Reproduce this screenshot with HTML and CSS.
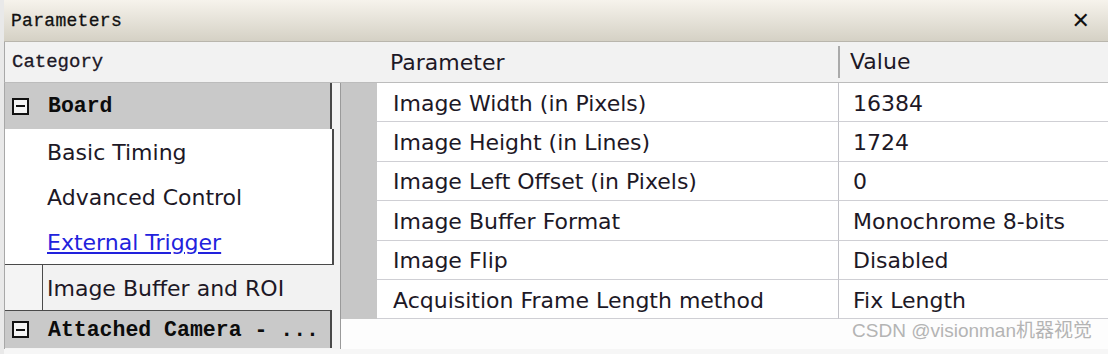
FILE: index.html
```html
<!DOCTYPE html>
<html lang="en">
<head>
    <meta charset="UTF-8">
    <title>Parameters</title>
    <link rel="stylesheet" href="styles.css">
</head>
<body>
    <div class="window">
        <div class="titlebar">
            <span class="title">Parameters</span>
            <span class="close">&#x2715;</span>
        </div>

        <div class="header">
            <div class="head-cat">Category</div>
            <div class="head-param">Parameter</div>
            <div class="head-value">Value</div>
        </div>

        <div class="content">
            <div class="categories">
                <div class="group"><span class="toggle"></span>Board</div>
                <div class="items">
                    <div class="item">Basic Timing</div>
                    <div class="item">Advanced Control</div>
                    <div class="item"><a href="#">External Trigger</a></div>
                </div>
                <div class="item selected">Image Buffer and ROI</div>
                <div class="group last"><span class="toggle"></span>Attached Camera - ...</div>
            </div>

            <div class="grid-wrap">
                <div class="grid">
                    <div class="gutter"></div><div class="cell">Image Width (in Pixels)</div><div class="cell val">16384</div>
                    <div class="gutter"></div><div class="cell">Image Height (in Lines)</div><div class="cell val">1724</div>
                    <div class="gutter"></div><div class="cell">Image Left Offset (in Pixels)</div><div class="cell val">0</div>
                    <div class="gutter"></div><div class="cell">Image Buffer Format</div><div class="cell val">Monochrome 8-bits</div>
                    <div class="gutter"></div><div class="cell">Image Flip</div><div class="cell val">Disabled</div>
                    <div class="gutter"></div><div class="cell">Acquisition Frame Length method</div><div class="cell val">Fix Length</div>
                </div>
                <div class="watermark">CSDN @visionman机器视觉</div>
            </div>
        </div>
    </div>
</body>
</html>
```

FILE: styles.css
```css
body {
    margin: 0;
    background: #f6f6f6;
    font-family: 'DejaVu Sans', 'Noto Sans', sans-serif;
    color: #1d1826;
}
.window {
    width: 1108px;
    height: 354px;
    box-sizing: border-box;
    border-left: 4px solid #e9e9e9;
    overflow: hidden;
}
.titlebar {
    height: 42px;
    display: flex;
    align-items: center;
    justify-content: space-between;
    padding: 0 18px 0 7px;
    background: linear-gradient(to bottom, #f6f3ec, #d5d1c5);
    border-bottom: 1px solid #b9b6ad;
    box-sizing: border-box;
}
.title {
    font-family: 'Liberation Mono', monospace;
    font-size: 18px;
    color: #111;
    letter-spacing: 0.3px;
    -webkit-text-stroke: 0.3px #111;
}
.close {
    font-family: 'DejaVu Sans', sans-serif;
    font-size: 22px;
    font-weight: bold;
    color: #111;
}
.header {
    height: 41px;
    display: flex;
    align-items: center;
    background: #f2f2f2;
    border-bottom: 1px solid #bcbcbc;
    border-left: 1px solid #a8a8a8;
    box-sizing: border-box;
    font-size: 22px;
}
.head-cat {
    width: 377px;
    padding-left: 7px;
    box-sizing: border-box;
    font-family: 'Liberation Mono', monospace;
    font-size: 19px;
    -webkit-text-stroke: 0.3px #1d1826;
}
.head-param {
    width: 456px;
    padding-left: 8px;
    box-sizing: border-box;
}
.head-value {
    padding-left: 10px;
    border-left: 2px solid #aaa;
    height: 32px;
    line-height: 32px;
}
.content {
    display: flex;
    height: 266px;
    border-left: 1px solid #a8a8a8;
}
.categories {
    width: 335px;
    display: flex;
    flex-direction: column;
    background: #f4f4f4;
    font-size: 22px;
}
.group {
    height: 46px;
    width: 327px;
    display: flex;
    align-items: center;
    gap: 19px;
    padding-left: 7px;
    box-sizing: border-box;
    background: #c9c9c9;
    border-right: 2px solid #4a4a4a;
    font-family: 'Liberation Mono', monospace;
    font-weight: bold;
    font-size: 21.5px;
    color: #0c0c0c;
}
.group.last {
    height: 38px;
    border-top: 1px solid #4a4a4a;
}
.toggle {
    width: 17px;
    height: 17px;
    border: 2px solid #111;
    box-sizing: border-box;
    position: relative;
    background: #f4f4f4;
}
.toggle::after {
    content: "";
    position: absolute;
    left: 2px;
    right: 2px;
    top: 5.5px;
    height: 2px;
    background: #111;
}
.items {
    width: 327px;
    background: #fff;
    border-right: 2px solid #4a4a4a;
    border-bottom: 1px solid #4a4a4a;
}
.item {
    height: 45px;
    line-height: 47px;
    padding-left: 42px;
}
.item a {
    color: #2222dd;
}
.selected {
    margin-left: 37px;
    padding-left: 4px;
    height: 45px;
    background: #f2f2f2;
    border-left: 1px solid #4a4a4a;
}
.grid-wrap {
    flex: 1;
    border-left: 1px solid #9a9a9a;
    background: #fdfdfd;
    position: relative;
}
.grid {
    display: grid;
    grid-template-columns: 36px 461px 1fr;
    grid-auto-rows: 39.4px;
    font-size: 22px;
}
.gutter {
    background: #c7c7c7;
}
.cell {
    background: #fff;
    border-bottom: 1px solid #cfcfd4;
    padding-left: 16px;
    padding-top: 2px;
    display: flex;
    align-items: center;
    box-sizing: border-box;
}
.cell.val {
    border-left: 1px solid #c2c2c8;
    padding-left: 14px;
}
.watermark {
    position: absolute;
    right: 16px;
    bottom: 7px;
    font-family: 'Liberation Sans', 'Noto Sans CJK SC', sans-serif;
    font-size: 19px;
    color: #b4b4b4;
}
```
